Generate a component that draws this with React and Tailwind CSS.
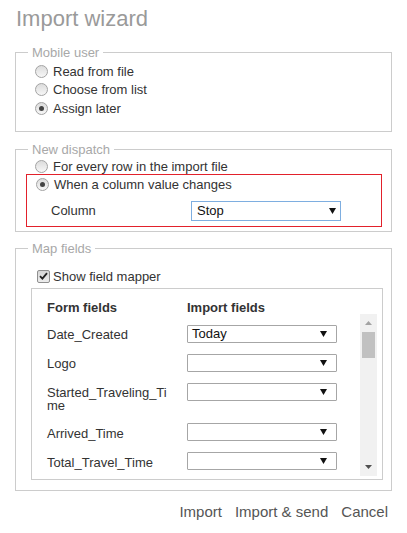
import React from 'react';

const mapperRows = [
  { label: 'Date_Created', value: 'Today' },
  { label: 'Logo', value: '' },
  { label: 'Started_Traveling_Time', value: '' },
  { label: 'Arrived_Time', value: '' },
  { label: 'Total_Travel_Time', value: '' },
];

const Caret = () => (
  <svg width="7" height="6" viewBox="0 0 7 6" className="shrink-0">
    <polygon points="0,0 7,0 3.5,6" fill="#111" />
  </svg>
);

const Radio = ({ checked }) => (
  <span className="flex h-[13px] w-[13px] shrink-0 items-center justify-center rounded-full border border-[#a3a3a3] bg-linear-to-b from-[#dcdcdc] to-[#f7f7f7]">
    {checked && <span className="h-[5px] w-[5px] rounded-full bg-[#444]" />}
  </span>
);

const RadioRow = ({ label, checked }) => (
  <div className="flex h-[18.5px] items-center pl-[9px]">
    <Radio checked={checked} />
    <span className="ml-[5px] leading-[15px]">{label}</span>
  </div>
);

const Legend = ({ children }) => (
  <legend className="ml-[2px] px-[4px] text-[13px] leading-[15px] text-[#a8a8a8]">{children}</legend>
);

const Scrollbar = () => (
  <div className="flex w-[17px] shrink-0 flex-col items-center bg-[#f1f1f1]">
    <svg width="7" height="4" viewBox="0 0 7 4" className="mt-[7px]">
      <polygon points="0,4 7,4 3.5,0" fill="#a3a3a3" />
    </svg>
    <div className="mt-[7px] h-[26px] w-[13px] bg-[#c1c1c1]" />
    <div className="flex-1" />
    <svg width="7" height="4" viewBox="0 0 7 4" className="mb-[7px]">
      <polygon points="0,0 7,0 3.5,4" fill="#505050" />
    </svg>
  </div>
);

export default function App() {
  return (
    <div className="min-h-[533px] bg-white px-[15px] pt-[6px] font-['Liberation_Sans',Arial,sans-serif] text-[13px] text-[#333]">
      <h1 className="pl-[1px] text-[22px] leading-[26px] text-[#9a9a9a]">Import wizard</h1>

      {/* mobile user */}
      <fieldset className="mt-[13px] border border-[#cccccc] pb-[13.5px] pl-[10px] pr-[8px]">
        <Legend>Mobile user</Legend>
        <div className="pt-[2px]">
          <RadioRow label="Read from file" />
          <RadioRow label="Choose from list" />
          <RadioRow label="Assign later" checked />
        </div>
      </fieldset>

      {/* new dispatch */}
      <fieldset className="mt-[10px] border border-[#cccccc] pb-[3.5px] pl-[10px] pr-[8px]">
        <Legend>New dispatch</Legend>
        <div className="pt-[0.5px]">
          <RadioRow label="For every row in the import file" />
          <div className="-mt-[2px] mr-[1px] border border-[#e2212b] pb-[5.5px]">
            <RadioRow label="When a column value changes" checked />
            <div className="mt-[7px] flex h-[20px] items-center pl-[24px]">
              <span className="w-[140px] leading-[15px]">Column</span>
              <div className="flex h-[20px] w-[150px] items-center justify-between border border-[#7eaee0] bg-white pl-[5px] pr-[4px] text-[#111]">
                <span className="leading-[15px]">Stop</span>
                <Caret />
              </div>
            </div>
          </div>
        </div>
      </fieldset>

      {/* field mapper */}
      <fieldset className="mt-[9px] border border-[#cccccc] pb-[10px] pl-[10px] pr-[8px]">
        <Legend>Map fields</Legend>
        <div className="mt-[11.25px] flex h-[18.5px] items-center pl-[11px]">
          <span className="flex h-[13px] w-[13px] shrink-0 items-center justify-center rounded-[2px] border border-[#8f8f8f] bg-linear-to-b from-[#d6d6d6] to-[#ededed]">
            <svg width="9" height="8" viewBox="0 0 9 8">
              <path d="M1 4.2 L3.4 6.6 L8 1.2" fill="none" stroke="#222" strokeWidth="1.8" />
            </svg>
          </span>
          <span className="ml-[3px] leading-[15px]">Show field mapper</span>
        </div>

        <div className="ml-[5px] mt-[2.25px] border border-[#cccccc]">
          <div className="flex pl-[15px] pt-[12.5px] font-bold leading-[13px]">
            <span className="w-[140px]">Form fields</span>
            <span>Import fields</span>
          </div>
          <div className="flex h-[165px] pb-[3px] pr-[5px]">
            <div className="flex flex-1 flex-col gap-[11px] overflow-hidden pl-[15px] pt-[10.5px]">
              {mapperRows.map((row) => (
                <div key={row.label} className="flex shrink-0 items-start">
                  <span className="w-[125px] break-all pt-[3.5px] leading-[13px]">{row.label}</span>
                  <div className="ml-[15px] flex h-[18px] w-[150px] shrink-0 items-center justify-between rounded-[1px] border border-[#a6a6a6] bg-white pl-[4px] pr-[9px] text-[#111]">
                    <span className="leading-[15px]">{row.value}</span>
                    <Caret />
                  </div>
                </div>
              ))}
            </div>
            <Scrollbar />
          </div>
        </div>
      </fieldset>

      <div className="mt-[12px] flex justify-end gap-[13px] pr-[4px] text-[15px] leading-[17px] text-[#555]">
        <span>Import</span>
        <span>Import &amp; send</span>
        <span>Cancel</span>
      </div>
    </div>
  );
}
